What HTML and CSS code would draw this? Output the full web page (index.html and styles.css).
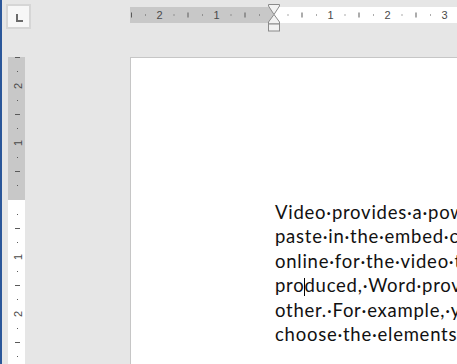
FILE: index.html
```html
<!DOCTYPE html>
<html lang="en">
<head>
  <meta charset="UTF-8" />
  <title>Document1 - Word</title>
  <link rel="stylesheet" href="styles.css">
</head>
<body>
  <div class="top-bar">
    <div class="tab-selector" title="Left Tab"><span class="tab-left"></span></div>
    <div class="h-ruler">
      <svg class="ruler-svg" width="327" height="16" viewBox="0 0 327 16">
        <rect x="0" y="0" width="143.5" height="16" fill="#c8c8c8"/>
        <rect x="143.5" y="0" width="184" height="16" fill="#ffffff"/>
        <g class="ticks" fill="#5a5a5a">
          <rect x="1" y="5.5" width="1" height="5"/>
          <rect x="15" y="7.5" width="1" height="1"/>
          <rect x="43.5" y="7.5" width="1" height="1"/>
          <rect x="57.5" y="5.5" width="1" height="5"/>
          <rect x="72" y="7.5" width="1" height="1"/>
          <rect x="100.5" y="7.5" width="1" height="1"/>
          <rect x="114.5" y="5.5" width="1" height="5"/>
          <rect x="129" y="7.5" width="1" height="1"/>
          <rect x="157.5" y="7.5" width="1" height="1"/>
          <rect x="171.5" y="5.5" width="1" height="5"/>
          <rect x="186" y="7.5" width="1" height="1"/>
          <rect x="214.5" y="7.5" width="1" height="1"/>
          <rect x="228.5" y="5.5" width="1" height="5"/>
          <rect x="243" y="7.5" width="1" height="1"/>
          <rect x="271.5" y="7.5" width="1" height="1"/>
          <rect x="285.5" y="5.5" width="1" height="5"/>
          <rect x="300" y="7.5" width="1" height="1"/>
        </g>
        <g class="ruler-num">
          <text x="29.5" y="12">2</text>
          <text x="86.5" y="12">1</text>
          <text x="200.5" y="12">1</text>
          <text x="257.5" y="12">2</text>
          <text x="314.5" y="12">3</text>
        </g>
      </svg>
      <svg class="indent-marker" width="13" height="28" viewBox="0 0 13 28">
        <path d="M0.5 0.5 H11.5 V2 L6 10.5 L0.5 2 Z" fill="#f2f2f2" stroke="#8a8a8a"/>
        <path d="M6 10.5 L11.5 18 V20 H0.5 V18 Z" fill="#f2f2f2" stroke="#8a8a8a"/>
        <rect x="0.5" y="20" width="11" height="7" fill="#f2f2f2" stroke="#8a8a8a"/>
      </svg>
    </div>
  </div>

  <div class="workspace">
    <div class="v-ruler">
      <svg class="ruler-svg" width="17" height="307" viewBox="0 0 17 307">
        <rect x="0" y="0" width="17" height="143" fill="#c8c8c8"/>
        <rect x="0" y="143" width="17" height="164" fill="#ffffff"/>
        <g class="ticks" fill="#5a5a5a">
          <rect x="7" y="0" width="5" height="1"/>
          <rect x="9" y="14" width="1" height="1"/>
          <rect x="9" y="43" width="1" height="1"/>
          <rect x="7" y="57" width="5" height="1"/>
          <rect x="9" y="71" width="1" height="1"/>
          <rect x="9" y="100" width="1" height="1"/>
          <rect x="7" y="114" width="5" height="1"/>
          <rect x="9" y="128" width="1" height="1"/>
          <rect x="9" y="157" width="1" height="1"/>
          <rect x="7" y="171" width="5" height="1"/>
          <rect x="9" y="185" width="1" height="1"/>
          <rect x="9" y="214" width="1" height="1"/>
          <rect x="7" y="228" width="5" height="1"/>
          <rect x="9" y="242" width="1" height="1"/>
          <rect x="9" y="271" width="1" height="1"/>
          <rect x="7" y="285" width="5" height="1"/>
          <rect x="9" y="299" width="1" height="1"/>
        </g>
        <g class="ruler-num">
          <text transform="translate(13.5 29) rotate(-90)">2</text>
          <text transform="translate(13.5 86) rotate(-90)">1</text>
          <text transform="translate(13.5 200) rotate(-90)">1</text>
          <text transform="translate(13.5 257) rotate(-90)">2</text>
        </g>
      </svg>
    </div>

    <div class="page">
      <div class="page-body">
        <p class="line">Video·provides·a·powerful·way·to·help·you·prove·your·point.·When·you·click·Online·Video,·you·can</p>
        <p class="line">paste·in·the·embed·code·for·the·video·you·want·to·add.·You·can·also·type·a·keyword·to·search</p>
        <p class="line">online·for·the·video·that·best·fits·your·document.·To·make·your·document·look·professionally</p>
        <p class="line">pro<span class="caret"></span>duced,·Word·provides·header,·footer,·cover·page,·and·text·box·designs·that·complement·each</p>
        <p class="line">other.·For·example,·you·can·add·a·matching·cover·page,·header,·and·sidebar.·Click·Insert·and·then</p>
        <p class="line">choose·the·elements·you·want·from·the·different·galleries.</p>
      </div>
    </div>
  </div>
</body>
</html>
```

FILE: styles.css
```css
html, body {
  margin: 0;
  height: 100%;
}

body {
  box-sizing: border-box;
  height: 364px;
  overflow: hidden;
  background-color: #e6e6e6;
  border-left: 2px solid #2b579a;
  font-family: Lato, "Open Sans", sans-serif;
}

/* Ruler strip along the top */
.top-bar {
  display: flex;
  height: 57px;
}

.tab-selector {
  box-sizing: border-box;
  width: 25px;
  height: 25px;
  margin: 4px 0 0 4px;
  border: 2px solid #d6d6d6;
  background-color: #f7f7f7;
  display: flex;
  align-items: center;
  justify-content: center;
}

.tab-left {
  width: 5px;
  height: 6px;
  border-left: 2px solid #6a6a6a;
  border-bottom: 2px solid #6a6a6a;
  margin: 2px 0 0 1px;
}

.h-ruler {
  position: relative;
  flex: 1;
  height: 16px;
  margin: 7px 0 0 99px;
}

.ruler-svg {
  display: block;
}

.ruler-num text {
  font-family: "Liberation Sans", Arial, sans-serif;
  font-size: 11px;
  fill: #4a4a4a;
  text-anchor: middle;
}

.indent-marker {
  position: absolute;
  left: 138px;
  top: -3px;
}

/* Vertical ruler and the page */
.workspace {
  display: flex;
  height: 307px;
}

.v-ruler {
  width: 17px;
  margin-left: 6px;
}

.page {
  flex: 1;
  margin-left: 105px;
  background-color: #ffffff;
  border-left: 1px solid #c6c6c6;
  border-top: 1px solid #c6c6c6;
  overflow: hidden;
}

.page-body {
  padding: 142px 0 0 144px;
}

.line {
  margin: 0;
  white-space: nowrap;
  font-size: 18.5px;
  line-height: 24.4px;
  letter-spacing: 0.75px;
  color: #111;
}

.caret {
  display: inline-block;
  width: 1px;
  height: 18px;
  margin-right: -1px;
  background-color: #000;
  vertical-align: -4px;
}
```
